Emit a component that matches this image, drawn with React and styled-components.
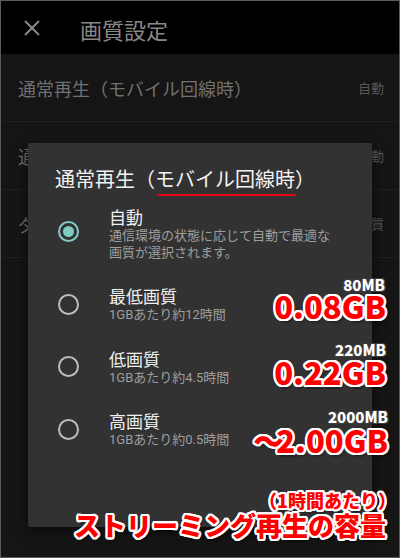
import React from "react";
import styled, { createGlobalStyle } from "styled-components";

const GlobalStyle = createGlobalStyle`
  html, body { margin: 0; padding: 0; background: #ffffff; }
  body { font-family: Roboto, "Noto Sans CJK JP", sans-serif; }
  * { box-sizing: border-box; }
`;

const outline = (color, w, drop) => {
  const parts = [];
  const steps = 16;
  for (let i = 0; i < steps; i++) {
    const a = (i / steps) * Math.PI * 2;
    parts.push(`${(Math.cos(a) * w).toFixed(2)}px ${(Math.sin(a) * w).toFixed(2)}px 0 ${color}`);
  }
  if (drop) parts.push(drop);
  return parts.join(", ");
};

const Frame = styled.div`
  position: relative;
  width: 400px;
  height: 558px;
  border: 1px solid #5c5c5c;
  background: #151515;
  overflow: hidden;
  display: flex;
  flex-direction: column;
`;

const Header = styled.header`
  height: 53px;
  flex: none;
  background: #000;
  display: flex;
  align-items: center;
  padding-left: 22px;
  gap: 39px;
`;

const Title = styled.h1`
  margin: 0;
  font-family: "Noto Sans CJK JP", sans-serif;
  font-weight: 400;
  font-size: 22px;
  color: #898989;
  line-height: 1;
  transform: translateY(1px);
`;

const List = styled.div`
  display: flex;
  flex-direction: column;
`;

const Row = styled.div`
  height: 68px;
  display: flex;
  align-items: center;
  justify-content: space-between;
  padding: 0 15px 0 17px;
  border-bottom: 1px solid #1f1f1f;
`;

const RowLabel = styled.span`
  font-family: "Noto Sans CJK JP", sans-serif;
  font-size: 18px;
  color: #707070;
`;

const RowValue = styled.span`
  font-family: "Noto Sans CJK JP", sans-serif;
  font-size: 13px;
  color: #575757;
`;

const Dialog = styled.div`
  position: absolute;
  left: 27px;
  top: 142px;
  width: 344px;
  height: 384px;
  background: #323232;
  border-radius: 2px;
  box-shadow: 0 4px 14px rgba(0, 0, 0, 0.5);
  display: flex;
  flex-direction: column;
  padding-top: 24px;
`;

const DialogTitle = styled.h2`
  margin: 0 0 3px 27px;
  font-family: "Noto Sans CJK JP", sans-serif;
  font-weight: 400;
  font-size: 20px;
  line-height: 24px;
  color: #f2f2f2;
`;

const Marked = styled.span`
  position: relative;
  &::after {
    content: "";
    position: absolute;
    left: 2px;
    right: -1px;
    bottom: -3px;
    height: 2px;
    background: #e60012;
  }
`;

const Options = styled.div`
  display: flex;
  flex-direction: column;
`;

const Option = styled.div`
  display: flex;
  align-items: center;
  padding: 12px 0;
`;

const RadioCell = styled.div`
  width: 81px;
  flex: none;
  display: flex;
  justify-content: center;
  margin-top: ${(p) => (p.$up ? -4 : 0)}px;
`;

const Radio = styled.span`
  width: 21px;
  height: 21px;
  border-radius: 50%;
  border: 2px solid ${(p) => (p.$on ? "#80cbc4" : "#bdbdbd")};
  display: flex;
  align-items: center;
  justify-content: center;
  &::after {
    content: "";
    width: 11px;
    height: 11px;
    border-radius: 50%;
    background: ${(p) => (p.$on ? "#80cbc4" : "transparent")};
  }
`;

const OptionText = styled.div`
  display: flex;
  flex-direction: column;
`;

const OptionLabel = styled.span`
  font-family: "Noto Sans CJK JP", sans-serif;
  font-size: 17px;
  line-height: 22px;
  color: #f0f0f0;
`;

const OptionDesc = styled.span`
  font-family: Roboto, "Noto Sans CJK JP", sans-serif;
  font-size: 13px;
  line-height: 16.5px;
  color: #9e9e9e;
  max-width: 228px;
`;

const Note = styled.span`
  position: absolute;
  right: ${(p) => p.$right}px;
  top: ${(p) => p.$top}px;
  font-family: "Noto Sans CJK JP", sans-serif;
  font-weight: 900;
  font-size: ${(p) => p.$size}px;
  line-height: 1;
  white-space: nowrap;
  color: ${(p) => (p.$small ? "#ffffff" : "#ff0000")};
  text-shadow: ${(p) =>
    p.$small
      ? outline("#3c3c3c", 1.3)
      : outline("#ffffff", 2.2, "2px 3px 3px rgba(0,0,0,0.6)")};
`;

const Tilde = styled.span`
  margin-right: -8px;
`;

const CloseIcon = () => (
  <svg width="18" height="18" viewBox="0 0 18 18" aria-hidden="true">
    <path d="M2 2 L16 16 M16 2 L2 16" stroke="#898989" strokeWidth="2" fill="none" />
  </svg>
);

const rows = [
  ["通常再生（モバイル回線時）", "自動"],
  ["通常再生（Wi-Fi接続時）", "自動"],
  ["ダウンロード画質", "高画質"],
];

const options = [
  { label: "自動", desc: "通信環境の状態に応じて自動で最適な画質が選択されます。", on: true },
  { label: "最低画質", desc: "1GBあたり約12時間" },
  { label: "低画質", desc: "1GBあたり約4.5時間" },
  { label: "高画質", desc: "1GBあたり約0.5時間" },
];

export default function App() {
  return (
    <>
      <GlobalStyle />
      <Frame>
        <Header>
          <CloseIcon />
          <Title>画質設定</Title>
        </Header>
        <List>
          {rows.map(([l, v]) => (
            <Row key={l}>
              <RowLabel>{l}</RowLabel>
              <RowValue>{v}</RowValue>
            </Row>
          ))}
        </List>
        <Dialog>
          <DialogTitle>
            通常再生（<Marked>モバイル回線時</Marked>）
          </DialogTitle>
          <Options>
            {options.map((o) => (
              <Option key={o.label}>
                <RadioCell $up={o.on}>
                  <Radio $on={o.on} />
                </RadioCell>
                <OptionText>
                  <OptionLabel>{o.label}</OptionLabel>
                  <OptionDesc>{o.desc}</OptionDesc>
                </OptionText>
              </Option>
            ))}
          </Options>
        </Dialog>
        <Note $small $size={15} $top={276} $right={14}>80MB</Note>
        <Note $size={31} $top={289} $right={13}>0.08GB</Note>
        <Note $small $size={15} $top={341} $right={13}>220MB</Note>
        <Note $size={31} $top={355} $right={13}>0.22GB</Note>
        <Note $small $size={15} $top={408} $right={11}>2000MB</Note>
        <Note $size={31} $top={423} $right={11}><Tilde>〜</Tilde>2.00GB</Note>
        <Note $size={18} $top={490} $right={3}>（1時間あたり）</Note>
        <Note $size={26} $top={511} $right={13}>ストリーミング再生の容量</Note>
      </Frame>
    </>
  );
}
